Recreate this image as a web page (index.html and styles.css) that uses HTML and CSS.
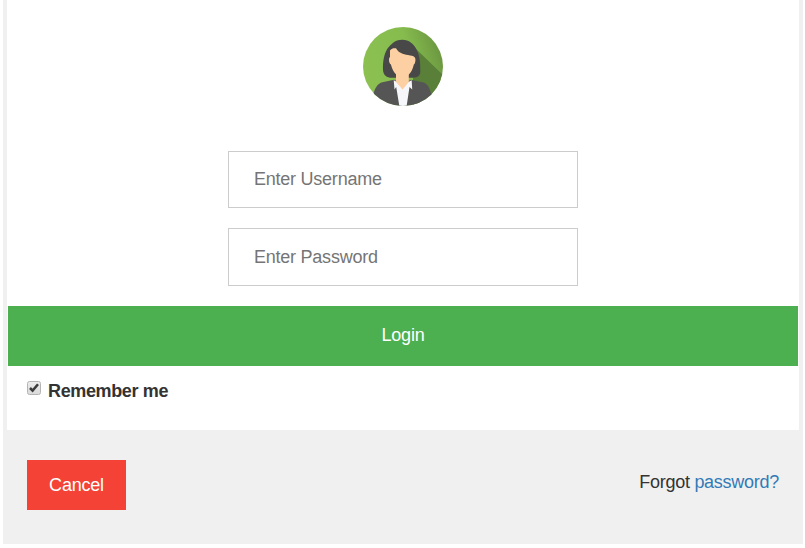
FILE: index.html
```html
<!DOCTYPE html>
<html lang="en">
<head>
<meta charset="utf-8">
<title>Login</title>
<link rel="stylesheet" href="styles.css">
</head>
<body>
<form class="login">
  <div class="main">
    <svg class="avatar" viewBox="0 0 80 80" role="img" aria-label="Avatar">
      <defs>
        <clipPath id="disc"><ellipse cx="40" cy="39.5" rx="40" ry="39.5"/></clipPath>
        <linearGradient id="green" x1="0" y1=".6" x2="1" y2=".3">
          <stop offset="0" stop-color="#8cc152"/><stop offset=".6" stop-color="#86bc4e"/><stop offset="1" stop-color="#6a9540"/>
        </linearGradient>
      </defs>
      <g clip-path="url(#disc)">
        <rect width="80" height="80" fill="url(#green)"/>
        <path d="M53 22L82 50V80H50V52Z" fill="#597f38"/>
        <path d="M39.5 12.8C46 12.8 50.5 17 53 21.5C57.5 29 57.3 38 57.3 45C57 50 53 50.8 48 50.8H29C23.5 50.8 20.3 48 20 43C19.8 36 20.5 28 24.5 21.5C28 18 31 12.8 39.5 12.8Z" fill="#484848"/>
        <path d="M10 80V68C12.5 60 14.5 56.5 19.5 55.2L31 52.8L40 57L48 52.8L60.5 55.5C65 57 67 62 68.5 68V80Z" fill="#555"/>
        <path d="M30.7 53.3L39.5 58L48.7 53.3L49.2 62.5L46.5 60L43.5 80H36.5L33.2 60L31.5 62.5Z" fill="#f5f7fa"/>
        <path d="M33 45H45.8V55L39.6 62.5L33 55Z" fill="#fcd0a3"/>
        <path d="M27 23.5C28.5 21.5 30.5 21 33 21.3C35.5 26 40 27.2 45 28C48 28.5 50.5 29 51.3 30C53 30.5 52.8 36.5 50.8 37.5C50 42 46.8 50 39.5 50C32.5 50 28.8 42 28 37.5C25.8 36.8 25.4 30.5 27 30Z" fill="#fcd0a3"/>
      </g>
    </svg>
    <input class="field" type="text" placeholder="Enter Username" aria-label="Username">
    <input class="field" type="password" placeholder="Enter Password" aria-label="Password">
    <button class="submit" type="button">Login</button>
    <label class="remember">
      <svg class="check" viewBox="0 0 14 14" aria-hidden="true">
        <defs><linearGradient id="box" x2="0" y2="1"><stop stop-color="#ededed"/><stop offset="1" stop-color="#dadada"/></linearGradient></defs>
        <rect x=".5" y=".5" width="13" height="13" rx="2" fill="url(#box)" stroke="#b4b4b4"/>
        <path d="M3 7L5.6 9.6L11 3.2" fill="none" stroke="#3c3c3c" stroke-width="2.5"/>
      </svg>
      <span>Remember me</span>
    </label>
  </div>
  <div class="footer">
    <button class="cancel" type="button">Cancel</button>
    <span class="forgot">Forgot <a href="#">password?</a></span>
  </div>
</form>
</body>
</html>
```
FILE: styles.css
```css
* { box-sizing: border-box; }
body {
  margin: 0;
  background: #fff;
  color: #333;
  font: 18px/26px "Liberation Sans", Arial, sans-serif;
}
.login {
  width: 800px;
  height: 544px;
  margin-left: 3px;
  background: #f0f0f0;
}
.main {
  display: flex;
  flex-direction: column;
  align-items: center;
  height: 430px;
  margin: 0 4px;
  padding: 27px 1px 0;
  background: #fff;
}
.avatar { width: 80px; height: 80px; margin-bottom: 44px; }
.field {
  width: 350px;
  height: 57px;
  margin: 0 0 20px;
  padding: 0 25px;
  border: 1px solid #ccc;
  background: #fff;
  font: inherit;
  letter-spacing: -0.24px;
}
.field + .field { height: 58px; }
.field::placeholder { color: #757575; opacity: 1; }
.submit, .cancel {
  padding: 0;
  border: 0;
  color: #fff;
  font: inherit;
  letter-spacing: -0.2px;
}
.submit { width: 100%; height: 60px; padding-bottom: 2px; background: #4caf50; }
.remember {
  display: flex;
  align-self: flex-start;
  gap: 7px;
  margin: 12px 0 0 19px;
  font-weight: bold;
  letter-spacing: -0.36px;
}
.check { width: 14px; height: 14px; margin-top: 3px; }
.footer {
  display: flex;
  justify-content: space-between;
  padding: 30px 24px 0;
}
.cancel { width: 99px; height: 50px; background: #f44336; }
.forgot { margin-top: 9px; letter-spacing: -0.27px; }
.forgot a { color: #337ab7; text-decoration: none; }
```
